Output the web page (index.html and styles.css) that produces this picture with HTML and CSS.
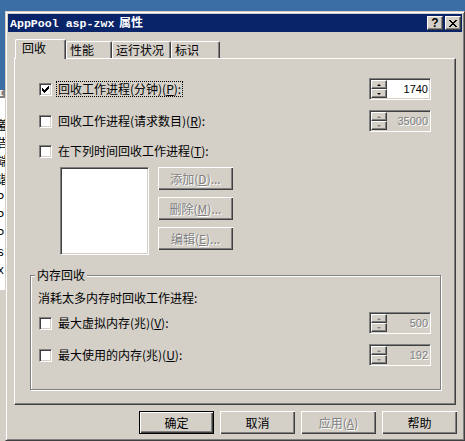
FILE: index.html
```html
<!DOCTYPE html>
<html lang="zh-CN">
<head>
<meta charset="utf-8">
<title>AppPool asp-zwx 属性</title>
<link rel="stylesheet" href="styles.css">
</head>
<body>
<div class="desktop">
  <div class="bgwin">
    <div class="bgbar">I</div>
    <div class="bglist">
      <div class="bgl">蓋</div>
      <div class="bgl">告</div>
      <div class="bgl">端</div>
      <div class="bgl">谐</div>
      <div class="bgl">P</div>
      <div class="bgl">P</div>
      <div class="bgl">P</div>
      <div class="bgl">s</div>
      <div class="bgl">x</div>
    </div>
  </div>

  <div class="dialog">
    <div class="titlebar">
      <span class="title"><span class="tlat">AppPool asp-zwx</span> <span class="tcjk">属性</span></span>
      <div class="tbtns">
        <span class="tbtn help">?</span>
        <span class="tbtn close"><svg width="8" height="7" viewBox="0 0 8 7" shape-rendering="crispEdges"><path d="M0 0h2v1h1v1h2v-1h1v-1h2v1h-1v1h-1v1h-1v1h1v1h1v1h1v1h-2v-1h-1v-1h-2v1h-1v1h-2v-1h1v-1h1v-1h1v-1h-1v-1h-1v-1h-1z" fill="#000"/></svg></span>
      </div>
    </div>

    <div class="dbody">
      <div class="tabs">
        <div class="tab sel">回收</div>
        <div class="tab w46">性能</div>
        <div class="tab w59">运行状况</div>
        <div class="tab w49">标识</div>
      </div>

      <div class="panel">
        <div class="row r1">
          <div class="chk">
            <span class="box"><svg width="13" height="13" viewBox="0 0 13 13" shape-rendering="crispEdges"><path d="M9 3h1v1h-1zM8 4h2v1h-2zM3 5h1v1h-1zM7 5h3v1h-3zM3 6h2v1h-2zM6 6h3v1h-3zM3 7h5v1h-5zM4 8h3v1h-3zM5 9h1v1h-1z" fill="#000"/></svg></span>
            <span class="lbl focus">回收工作进程(分钟)(<u>P</u>):</span>
          </div>
          <div class="spin">
            <div class="sbtns"><span class="sb up"><i></i></span><span class="sb dn"><i></i></span></div>
            <span class="val">1740</span>
          </div>
        </div>

        <div class="row r2">
          <div class="chk">
            <span class="box"></span>
            <span class="lbl">回收工作进程(请求数目)(<u>R</u>):</span>
          </div>
          <div class="spin off">
            <div class="sbtns"><span class="sb up"><i></i></span><span class="sb dn"><i></i></span></div>
            <span class="val">35000</span>
          </div>
        </div>

        <div class="row r3">
          <div class="chk">
            <span class="box"></span>
            <span class="lbl">在下列时间回收工作进程(<u>T</u>):</span>
          </div>
        </div>

        <div class="listarea">
          <div class="listbox"></div>
          <div class="sidebtns">
            <span class="btn off">添加(<u>D</u>)...</span>
            <span class="btn off">删除(<u>M</u>)...</span>
            <span class="btn off">编辑(<u>E</u>)...</span>
          </div>
        </div>

        <div class="group">
          <span class="glabel">内存回收</span>
          <div class="gtext">消耗太多内存时回收工作进程:</div>
          <div class="row r4">
            <div class="chk">
              <span class="box"></span>
              <span class="lbl">最大虚拟内存(兆)(<u>V</u>):</span>
            </div>
            <div class="spin off">
              <div class="sbtns"><span class="sb up"><i></i></span><span class="sb dn"><i></i></span></div>
              <span class="val">500</span>
            </div>
          </div>
          <div class="row r5">
            <div class="chk">
              <span class="box"></span>
              <span class="lbl">最大使用的内存(兆)(<u>U</u>):</span>
            </div>
            <div class="spin off">
              <div class="sbtns"><span class="sb up"><i></i></span><span class="sb dn"><i></i></span></div>
              <span class="val">192</span>
            </div>
          </div>
        </div>
      </div>

      <div class="buttons">
        <span class="btn def">确定</span>
        <span class="btn">取消</span>
        <span class="btn off">应用(<u>A</u>)</span>
        <span class="btn">帮助</span>
      </div>
    </div>
  </div>
</div>
</body>
</html>
```

FILE: styles.css
```css
* { box-sizing: border-box; margin: 0; padding: 0; }

body {
  margin: 0;
  background: #3a6ea5;
  font: 12px/14px "Noto Sans CJK SC", "Noto Sans", sans-serif;
  color: #000;
  overflow: hidden;
}

.desktop {
  position: relative;
  width: 465px;
  height: 441px;
  overflow: hidden;
}

/* background window peeking at the left edge */
.bgwin {
  position: absolute;
  left: 0;
  top: 90px;
  width: 5px;
  height: 351px;
  background: #d4d0c8;
  overflow: hidden;
}
.bgbar {
  height: 8px;
  background: #808080;
  color: #fff;
  font: bold 9px/8px "Liberation Mono", monospace;
  text-indent: -2px;
}
.bglist {
  height: 192px;
  background: #fff;
  padding-top: 22px;
}
.bgl {
  height: 18px;
  font: 12px/14px "Liberation Mono", "Noto Sans CJK SC", monospace;
  text-indent: -3px;
  white-space: nowrap;
}

/* dialog window */
.dialog {
  position: absolute;
  left: 5px;
  top: 11px;
  width: 460px;
  height: 430px;
  background: #d4d0c8;
  border: 1px solid;
  border-color: #d4d0c8 #404040 #404040 #d4d0c8;
  box-shadow: inset 1px 1px #fff, inset -1px -1px #808080;
  padding: 2px;
  display: flex;
  flex-direction: column;
}

.titlebar {
  height: 18px;
  background: #0a246a;
  color: #fff;
  display: flex;
  align-items: center;
  justify-content: space-between;
  padding-left: 2px;
}
.title {
  font-weight: bold;
  white-space: pre;
  line-height: 16px;
}
.tlat {
  font: bold 11.6px/16px "Liberation Mono", monospace;
}
.tcjk {
  font: bold 12px/16px "Noto Sans CJK SC", sans-serif;
  margin-left: 2px;
}
.tbtns {
  display: flex;
  gap: 2px;
  padding-right: 1px;
}
.tbtn {
  width: 16px;
  height: 14px;
  background: #d4d0c8;
  border: 1px solid;
  border-color: #fff #404040 #404040 #fff;
  box-shadow: inset -1px -1px #808080;
  color: #000;
  display: flex;
  align-items: center;
  justify-content: center;
}
.tbtn.help {
  font: bold 12px/12px "Liberation Sans", sans-serif;
  padding-bottom: 1px;
}
.tbtn.close svg { display: block; margin-left: -1px; }

.dbody {
  flex: 1;
  padding: 7px 6px 0 6px;
  display: flex;
  flex-direction: column;
}

/* tabs */
.tabs {
  display: flex;
  align-items: flex-end;
  height: 19px;
  padding-left: 1px;
}
.tab {
  height: 17px;
  border-top: 1px solid #fff;
  border-left: 1px solid #fff;
  border-right: 1px solid #404040;
  box-shadow: inset -1px 0 #808080;
  border-radius: 2px 2px 0 0;
  padding-left: 3px;
  line-height: 16px;
  white-space: nowrap;
}
.tab.sel {
  width: 51px;
  height: 20px;
  margin-bottom: -1px;
  padding-left: 6px;
  background: #d4d0c8;
  position: relative;
  z-index: 2;
}
.w46 { width: 46px; }
.w59 { width: 59px; }
.w49 { width: 49px; }

/* tab panel */
.panel {
  height: 347px;
  border-top: 1px solid #fff;
  border-left: 1px solid #fff;
  border-right: 1px solid #404040;
  border-bottom: 1px solid #404040;
  box-shadow: inset -1px -1px #808080;
  padding: 19px 24px 0 24px;
}

.row {
  display: flex;
  align-items: center;
  justify-content: space-between;
  height: 22px;
}
.r2 { margin-top: 10px; }
.r3 { margin-top: 8px; }
.r4 { margin-top: 6px; }
.r5 { margin-top: 10px; }

.chk {
  display: flex;
  align-items: center;
  gap: 5px;
}
.box {
  width: 13px;
  height: 13px;
  background: #fff;
  border: 1px solid;
  border-color: #808080 #fff #fff #808080;
  box-shadow: inset 1px 1px #404040, inset -1px -1px #d4d0c8;
  position: relative;
}
.box svg {
  position: absolute;
  left: -1px;
  top: -1px;
}
.lbl {
  padding: 0 1px;
  line-height: 14px;
  white-space: nowrap;
}
.lbl.focus { outline: 1px dotted #000; outline-offset: 0; }
u { text-decoration: underline; text-underline-offset: 1px; }

/* spinner */
.spin {
  width: 62px;
  height: 22px;
  display: flex;
  background: #fff;
  border: 1px solid;
  border-color: #808080 #fff #fff #808080;
  box-shadow: inset 1px 1px #404040, inset -1px -1px #d4d0c8;
  padding: 1px 1px 1px 1px;
}
.spin.off { background: #d4d0c8; }
.sbtns {
  width: 16px;
  display: flex;
  flex-direction: column;
}
.sb {
  flex: 1;
  background: #d4d0c8;
  border: 1px solid;
  border-color: #fff #404040 #404040 #fff;
  box-shadow: inset -1px -1px #808080;
  display: flex;
  align-items: center;
  justify-content: center;
}
.sb i {
  width: 0;
  height: 0;
  border-left: 2px solid transparent;
  border-right: 2px solid transparent;
}
.sb.up i { border-bottom: 2px solid #000; }
.sb.dn i { border-top: 2px solid #000; }
.spin.off .sb.up i { border-bottom-color: #808080; }
.spin.off .sb.dn i { border-top-color: #808080; }
.val {
  flex: 1;
  text-align: right;
  padding-right: 1px;
  font: 11px/18px "Liberation Sans", sans-serif;
}
.spin.off .val { color: #808080; text-shadow: 1px 1px #fff; }

/* schedule list */
.listarea {
  display: flex;
  margin-top: 5px;
  padding-left: 21px;
  gap: 9px;
}
.listbox {
  width: 89px;
  height: 88px;
  background: #fff;
  border: 1px solid;
  border-color: #808080 #fff #fff #808080;
  box-shadow: inset 1px 1px #404040, inset -1px -1px #d4d0c8;
}
.sidebtns {
  display: flex;
  flex-direction: column;
  gap: 7px;
}

/* buttons */
.btn {
  width: 75px;
  height: 23px;
  background: #d4d0c8;
  box-shadow: inset 1px 1px #fff, inset -1px -1px #404040, inset -2px -2px #808080;
  display: flex;
  align-items: center;
  justify-content: center;
  white-space: nowrap;
  line-height: 14px;
}
.btn.off { color: #808080; text-shadow: 1px 1px #fff; }
.btn.def {
  border: 1px solid #000;
  box-shadow: inset 1px 1px #fff, inset -1px -1px #404040, inset -2px -2px #808080;
}

/* memory group */
.group {
  position: relative;
  margin: 20px -10px 0 -9px;
  height: 115px;
  border: 1px solid #808080;
  box-shadow: 1px 1px 0 #fff, inset 1px 1px 0 #fff;
  padding: 14px 9px 0 8px;
}
.glabel {
  position: absolute;
  top: -8px;
  left: 4px;
  padding: 0 2px;
  background: #d4d0c8;
  line-height: 14px;
}
.gtext {
  line-height: 16px;
  margin-left: -1px;
}

.buttons {
  display: flex;
  justify-content: flex-end;
  gap: 6px;
  margin-top: 6px;
  margin-right: -1px;
}
```
